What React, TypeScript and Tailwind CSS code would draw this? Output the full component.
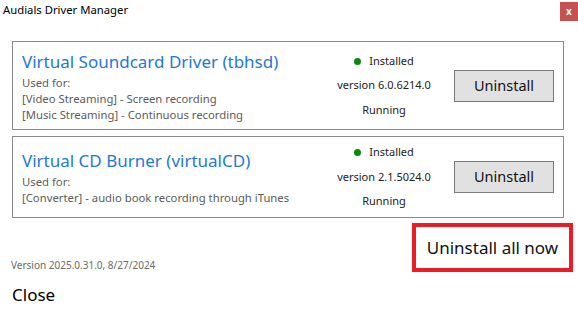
import React from 'react';

type Driver = {
  name: string;
  usage: string[];
  version: string;
  height: string;
};

const drivers: Driver[] = [
  {
    name: 'Virtual Soundcard Driver (tbhsd)',
    usage: ['[Video Streaming] - Screen recording', '[Music Streaming] - Continuous recording'],
    version: 'version 6.0.6214.0',
    height: 'h-[89px]',
  },
  {
    name: 'Virtual CD Burner (virtualCD)',
    usage: ['[Converter] - audio book recording through iTunes'],
    version: 'version 2.1.5024.0',
    height: 'h-[82px]',
  },
];

const DriverCard: React.FC<{ driver: Driver }> = ({ driver }) => (
  <div className={`flex items-center border border-[#8a8a8a] bg-white pl-[9px] pr-[9px] ${driver.height}`}>
    <div className="flex-1 flex flex-col">
      <div className="text-[17px] leading-[26px] text-[#1f78d6]">{driver.name}</div>
      <div className="text-[11.3px] leading-[16px] text-[#5c5c5c]">Used for:</div>
      {driver.usage.map((u) => (
        <div key={u} className="text-[11.3px] leading-[16px] text-[#5c5c5c]">
          {u}
        </div>
      ))}
    </div>
    <div className="w-[120px] flex flex-col items-center text-[11px] leading-[24.5px] text-[#222]">
      <div className="flex items-center gap-[8px]">
        <span className="w-[7px] h-[7px] rounded-full bg-[#0a8a0a]" />
        <span>Installed</span>
      </div>
      <div>{driver.version}</div>
      <div>Running</div>
    </div>
    <button className="ml-[10px] w-[100px] h-[32px] border border-[#7a7a7a] bg-[#e1e1e1] text-[14.5px] text-[#111]">
      Uninstall
    </button>
  </div>
);

const App: React.FC = () => {
  return (
    <div className="w-[578px] h-[310px] bg-white overflow-hidden font-['Noto_Sans',sans-serif]">
      {/* title bar */}
      <div className="h-[24px] flex justify-between items-start">
        <span className="pl-[3px] pt-[3px] text-[11.3px] leading-[14px] text-black">Audials Driver Manager</span>
        <button className="mt-[2px] w-[18px] h-[19px] bg-[#c75050] text-white text-[10px] font-bold leading-[19px] flex items-center justify-center">
          x
        </button>
      </div>

      <div className="pt-[17px] pl-[12px] pr-[14px] flex flex-col gap-[6px]">
        {drivers.map((d) => (
          <DriverCard key={d.name} driver={d} />
        ))}
      </div>

      <div className="mt-[5px] pl-[11px] pr-[5px] flex justify-between items-end">
        <span className="text-[10px] leading-[14px] text-[#6a6a6a]">Version 2025.0.31.0, 8/27/2024</span>
        <div className="w-[161px] h-[49px] border-[4px] border-[#ed1c24] flex items-center justify-center text-[17px] text-[#111]">
          Uninstall all now
        </div>
      </div>

      <div className="mt-[12px] pl-[12px] text-[17px] leading-[22px] text-black">Close</div>
    </div>
  );
};

export default App;
